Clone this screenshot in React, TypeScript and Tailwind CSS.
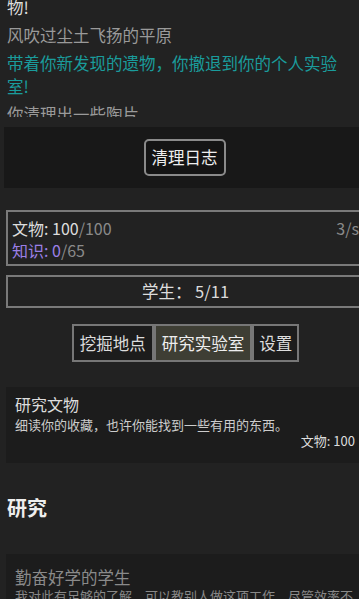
export default function App() {
  return (
    <div className="h-[599px] w-[359px] overflow-hidden bg-[#222222] font-['Noto_Sans_CJK_SC',sans-serif] text-[#dddddd]">
      {/* log */}
      <div className="h-[117px] overflow-hidden px-[7px]">
        <div className="mt-[-4px] flex flex-col gap-[5px] text-[16.5px] leading-[23px]">
          <p className="text-[#dddddd]">物!</p>
          <p className="text-[#9a9a9a]">风吹过尘土飞扬的平原</p>
          <p className="text-[#1a9c9c]">带着你新发现的遗物，你撤退到你的个人实验室!</p>
          <p className="text-[#9a9a9a]">你清理出一些陶片</p>
        </div>
      </div>

      <div className="ml-[4px] mt-[10px] flex h-[61px] w-[361px] items-center justify-center bg-[#181818]">
        <button className="h-[37px] rounded-[5px] border-2 border-[#8a8a8a] bg-[#141414] px-[6px] text-[16.5px] leading-none text-[#eeeeee]">
          清理日志
        </button>
      </div>

      <div className="ml-[6px] w-[359px]">
        <div className="mt-[22px] flex h-[56px] justify-between border-2 border-[#7a7a7a] px-[4px] pt-[5px] text-[16px] leading-[22px]">
          <div>
            <p>
              文物: 100<span className="text-[#8a8a8a]">/100</span>
            </p>
            <p className="text-[#9b7fe6]">
              知识: 0<span className="text-[#8a8a8a]">/65</span>
            </p>
          </div>
          <span className="text-[#8a8a8a]">3/s</span>
        </div>

        <div className="mt-[9px] flex h-[33px] items-center justify-center border-2 border-[#7a7a7a] text-[16.5px]">
          学生： 5/11
        </div>

        <div className="mt-[16px] flex justify-center text-[16.5px]">
          <button className="h-[38px] border-2 border-[#777777] bg-[#1c1c1c] px-[6px] text-[#dddddd]">挖掘地点</button>
          <button className="h-[38px] border-2 border-[#777777] bg-[#3e3e34] px-[6px] text-[#eeeeee]">研究实验室</button>
          <button className="h-[38px] border-2 border-[#777777] bg-[#1c1c1c] px-[5px] text-[#dddddd]">设置</button>
        </div>

        <div className="mt-[25px] bg-[#1c1c1c] pb-[14px] pl-[9px] pr-[10px] pt-[6px]">
          <p className="text-[16px] leading-[22px] text-[#dddddd]">研究文物</p>
          <p className="mt-[2px] text-[13px] leading-[16px] text-[#cccccc]">细读你的收藏，也许你能找到一些有用的东西。</p>
          <p className="text-right text-[13px] leading-[16px] text-[#dddddd]">文物: 100</p>
        </div>
      </div>

      <h2 className="mt-[31px] px-[7px] text-[20px] font-bold leading-[28px] text-[#eeeeee]">研究</h2>

      <div className="ml-[6px] mt-[32px] w-[359px] bg-[#1c1c1c] pl-[9px] pr-[10px] pt-[12px]">
        <p className="text-[16.5px] leading-[22px] text-[#8a8a8a]">勤奋好学的学生</p>
        <p className="text-[13px] leading-[16px] text-[#888888]">我对此有足够的了解，可以教别人做这项工作，尽管效率不高。</p>
      </div>
    </div>
  );
}
